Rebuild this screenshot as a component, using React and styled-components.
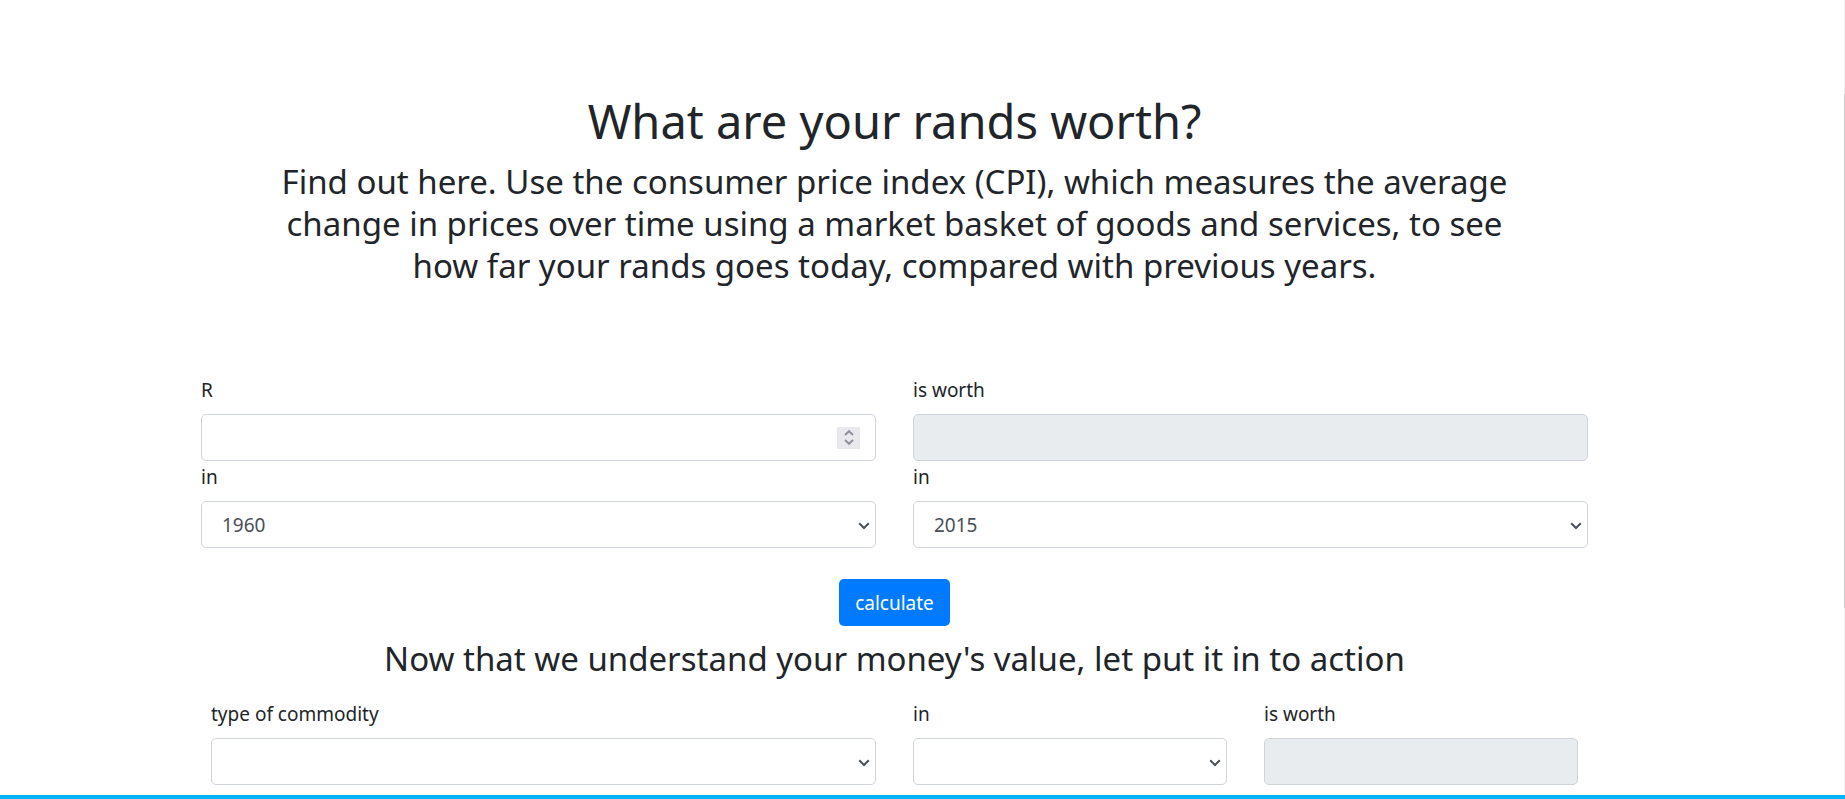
import React, { useId, useState } from "react";
import styled, { createGlobalStyle } from "styled-components";

const GlobalStyle = createGlobalStyle`
  *, *::before, *::after { box-sizing: border-box; }
  body {
    margin: 0;
    background: #fff;
    color: #212529;
    font-family: "Segoe UI", "Noto Sans", sans-serif;
    font-size: 19px;
    line-height: 28px;
  }
`;

const Page = styled.div`
  display: flex;
  flex-direction: column;
  min-height: 100vh;
`;

const Main = styled.main`
  flex: 1;
  padding: 91px 257px 10px 201px;
`;

const Intro = styled.header`
  padding: 0 80px;
  margin-bottom: 87px;
  text-align: center;
`;

const Title = styled.h1`
  margin: 0 0 10px;
  font-size: 47px;
  font-weight: 400;
  line-height: 60px;
`;

const Subtitle = styled.h2`
  margin: 0;
  font-size: 33px;
  font-weight: 400;
  line-height: 42px;
  text-align: center;
`;

const Fields = styled.div`
  display: grid;
  grid-template-columns: repeat(${(p) => p.$columns}, 1fr);
  column-gap: 37px;
  padding: 0 ${(p) => p.$inset || 0}px;
`;

const Cell = styled.div`
  grid-column: span ${(p) => p.$span || 1};
`;

const Label = styled.label`
  display: block;
  margin-bottom: 10px;
  padding-top: 2px;
`;

const Frame = styled.div`
  position: relative;
`;

const Control = styled.input`
  display: block;
  width: 100%;
  height: 47px;
  padding: 0 20px;
  border: 1px solid #ced4da;
  border-radius: 5px;
  background: #fff;
  color: #495057;
  font: inherit;
  appearance: none;

  &:disabled {
    background: #e9ecef;
    opacity: 1;
  }
  &[type="number"] {
    appearance: textfield;
  }
`;

const Arrow = styled.svg`
  position: absolute;
  right: 6px;
  top: 50%;
  width: 12px;
  height: 8px;
  margin-top: -3px;
  pointer-events: none;
`;

const Stepper = styled.div`
  position: absolute;
  right: 16px;
  top: 50%;
  width: 23px;
  height: 22px;
  margin-top: -11px;
  padding: 2px 0;
  display: grid;
  grid-template-rows: 1fr 1fr;
  background: #e9e9ed;
`;

const Step = styled.button`
  display: grid;
  place-items: center;
  padding: 0;
  border: 0;
  background: transparent;
`;

const Actions = styled.div`
  display: flex;
  justify-content: center;
  margin: 31px 0 12px;
`;

const Submit = styled.button`
  height: 47px;
  padding: 0 16px;
  border: 0;
  border-radius: 5px;
  background: #007bff;
  color: #fff;
  font: inherit;
`;

const Commodity = styled.section`
  display: grid;
  row-gap: 18px;
`;

const Footer = styled.footer`
  height: 4px;
  background: #00b4ff;
`;

const ScrollTrack = styled.div`
  position: fixed;
  inset: 0 0 4px auto;
  width: 1px;
  background: #f0f0f0;
  display: grid;
  grid-template-rows: 94fr 514fr 187fr;
`;

const ScrollThumb = styled.div`
  grid-row: 2;
  background: #cdcdcd;
`;

function SelectField({ label, options, span }) {
  const id = useId();
  return (
    <Cell $span={span}>
      <Label htmlFor={id}>{label}</Label>
      <Frame>
        <Control as="select" id={id}>
          {options.map((o) => (
            <option key={o}>{o}</option>
          ))}
        </Control>
        <Arrow viewBox="0 0 12 8" aria-hidden="true">
          <path d="M1.2 1.2 6 6l4.8-4.8" fill="none" stroke="#495057" strokeWidth="2" />
        </Arrow>
      </Frame>
    </Cell>
  );
}

function ResultField({ label }) {
  const id = useId();
  return (
    <Cell>
      <Label htmlFor={id}>{label}</Label>
      <Control id={id} type="text" disabled />
    </Cell>
  );
}

function AmountField({ label }) {
  const id = useId();
  const [value, setValue] = useState("");
  const step = (by) => setValue(String(Number(value) + by));
  return (
    <Cell>
      <Label htmlFor={id}>{label}</Label>
      <Frame>
        <Control id={id} type="number" value={value} onChange={(e) => setValue(e.target.value)} />
        <Stepper>
          <Step type="button" aria-label="Increase" onClick={() => step(1)}>
            <svg width="10" height="6" viewBox="0 0 10 6" aria-hidden="true">
              <path d="M1 5l4-3.8L9 5" fill="none" stroke="#8f8f9d" strokeWidth="2" />
            </svg>
          </Step>
          <Step type="button" aria-label="Decrease" onClick={() => step(-1)}>
            <svg width="10" height="6" viewBox="0 0 10 6" aria-hidden="true">
              <path d="M1 1l4 3.8L9 1" fill="none" stroke="#8f8f9d" strokeWidth="2" />
            </svg>
          </Step>
        </Stepper>
      </Frame>
    </Cell>
  );
}

export default function App() {
  return (
    <Page>
      <GlobalStyle />
      <Main>
        <Intro>
          <Title>What are your rands worth?</Title>
          <Subtitle>
            Find out here. Use the consumer price index (CPI), which measures the average change in
            prices over time using a market basket of goods and services, to see how far your rands
            goes today, compared with previous years.
          </Subtitle>
        </Intro>
        <form onSubmit={(e) => e.preventDefault()}>
          <Fields $columns={2}>
            <AmountField label="R" />
            <ResultField label="is worth" />
            <SelectField label="in" options={["1960"]} />
            <SelectField label="in" options={["2015"]} />
          </Fields>
          <Actions>
            <Submit type="submit">calculate</Submit>
          </Actions>
        </form>
        <Commodity>
          <Subtitle>Now that we understand your money's value, let put it in to action</Subtitle>
          <Fields $columns={4} $inset={10}>
            <SelectField label="type of commodity" options={[""]} span={2} />
            <SelectField label="in" options={[""]} />
            <ResultField label="is worth" />
          </Fields>
        </Commodity>
      </Main>
      <Footer />
      <ScrollTrack aria-hidden="true">
        <ScrollThumb />
      </ScrollTrack>
    </Page>
  );
}
